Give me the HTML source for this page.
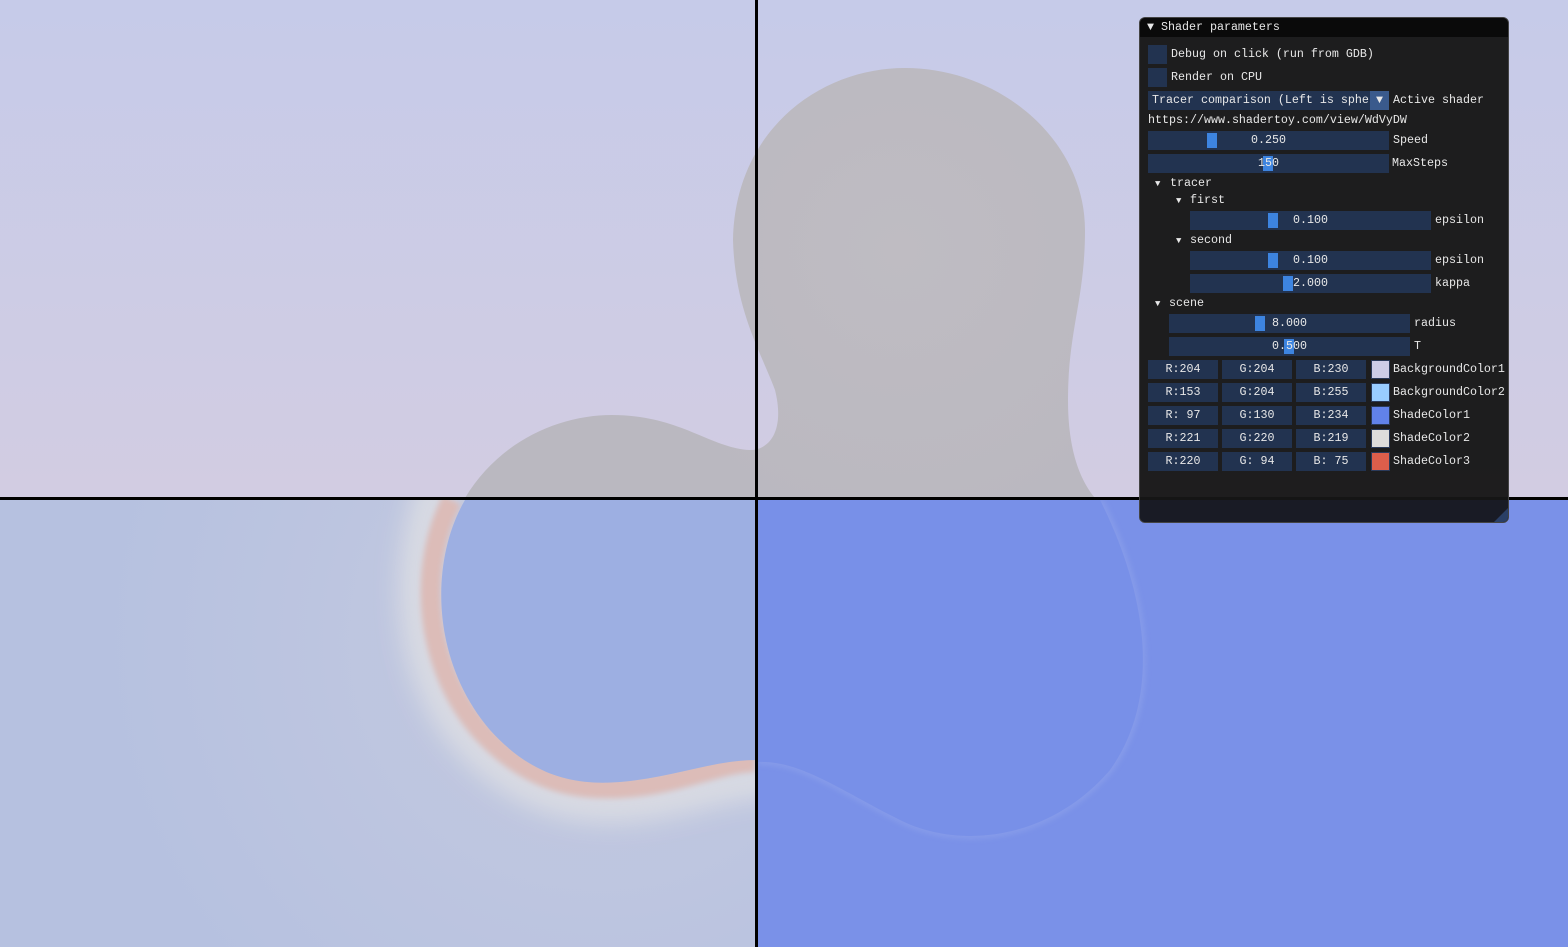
<!DOCTYPE html>
<html><head><meta charset="utf-8"><style>
html,body{margin:0;padding:0;width:1568px;height:947px;overflow:hidden;background:#c8cce9}
svg{position:absolute;left:0;top:0}
#p{position:absolute;left:1139px;top:17px;width:370px;height:506px;background:rgba(22,22,22,0.96);border:1px solid #444;border-radius:6px;box-sizing:border-box;font-family:"Liberation Mono",monospace;font-size:11.67px;color:#e8e8e8;overflow:hidden}
#p div{position:absolute;white-space:pre;line-height:19px;height:19px}
.t{left:0;top:0;width:370px;background:#0a0a0a}
.f{background:#223350}
.g{background:#3d84e0}
.c{text-align:center}
</style></head><body>
<svg width="1568" height="947" viewBox="0 0 1568 947">
<defs>
<linearGradient id="tl" x1="0" y1="0" x2="0" y2="1"><stop offset="0" stop-color="#c6cbe9"/><stop offset="1" stop-color="#d2cce2"/></linearGradient>
<radialGradient id="bl" cx="600" cy="640" r="500" gradientUnits="userSpaceOnUse"><stop offset="0" stop-color="#c5cadf"/><stop offset="1" stop-color="#b6c1e0"/></radialGradient>
<radialGradient id="bg" cx="900" cy="250" r="300" gradientUnits="userSpaceOnUse"><stop offset="0" stop-color="#bfbcc2"/><stop offset="1" stop-color="#bab8c0"/></radialGradient>
<filter id="b12" x="-50%" y="-50%" width="200%" height="200%"><feGaussianBlur stdDeviation="12"/></filter>
<filter id="b3" x="-20%" y="-20%" width="140%" height="140%"><feGaussianBlur stdDeviation="3"/></filter>
<clipPath id="cbl"><rect x="0" y="500" width="755" height="447"/></clipPath>
<clipPath id="cbr"><rect x="758" y="500" width="810" height="447"/></clipPath>
</defs>
<rect x="0" y="0" width="1568" height="498" fill="url(#tl)"/>
<rect x="0" y="500" width="755" height="447" fill="url(#bl)"/>
<rect x="758" y="500" width="810" height="447" fill="#7a91e8"/>
<path d="M465 498 C500 440 560 415 612 415 C680 415 710 448 750 450 C770 450 785 430 775 390 C760 350 735 310 733 240 C735 130 820 68 905 68 C1000 68 1085 140 1085 230 C1085 300 1068 330 1068 400 C1068 450 1080 480 1095 498 Z" fill="url(#bg)"/>
<g clip-path="url(#cbl)">
<path d="M440 480 C408 560 408 670 472 740 C525 798 585 805 625 802 C685 798 725 778 775 778" fill="none" stroke="#dfe0e4" stroke-width="40" opacity="0.8" filter="url(#b12)"/>
<path d="M452 500 C420 560 420 660 480 730 C530 785 580 790 620 788 C680 785 720 762 755 762" fill="none" stroke="#dcbcb8" stroke-width="20" filter="url(#b3)"/>
<path d="M465 500 C430 560 430 660 490 730 C535 780 580 785 620 782 C670 778 715 760 755 760 L755 500 Z" fill="#9dafe2"/>
</g>
<g clip-path="url(#cbr)">
<path d="M758 762 C800 760 840 790 900 820 C960 850 1050 840 1110 770 C1160 700 1150 600 1100 500" fill="none" stroke="#9aacec" stroke-width="5" opacity="0.5" filter="url(#b3)"/>
<path d="M758 762 C800 760 840 790 900 820 C960 850 1050 840 1110 770 C1160 700 1150 600 1100 500 L758 500 Z" fill="#7890e8"/>
</g>
<rect x="0" y="497" width="1568" height="3" fill="#000"/>
<rect x="755" y="0" width="3" height="947" fill="#000"/>
</svg>
<div id="p">
<div class="t" style="padding-left:7px">▼ Shader parameters</div>
<div class="f" style="left:8px;top:27px;width:19px"></div><div style="left:31px;top:27px">Debug on click (run from GDB)</div>
<div class="f" style="left:8px;top:50px;width:19px"></div><div style="left:31px;top:50px">Render on CPU</div>
<div class="f" style="left:8px;top:73px;width:222px;padding-left:4px;overflow:hidden">Tracer comparison (Left is sphe</div>
<div style="left:230px;top:73px;width:19px;background:#3a5a8c;text-align:center">▼</div><div style="left:253px;top:73px">Active shader</div>
<div style="left:8px;top:93px">https://www.shadertoy.com/view/WdVyDW</div>
<div class="f" style="left:8px;top:113px;width:241px"></div><div class="g" style="left:67px;top:115px;width:10px;height:15px"></div><div class="c" style="left:8px;top:113px;width:241px">0.250</div><div style="left:253px;top:113px">Speed</div>
<div class="f" style="left:8px;top:136px;width:241px"></div><div class="g" style="left:123px;top:138px;width:10px;height:15px"></div><div class="c" style="left:8px;top:136px;width:241px">150</div><div style="left:252px;top:136px">MaxSteps</div>
<div style="left:15px;top:157px;font-size:9px">▼</div><div style="left:30px;top:156px">tracer</div>
<div style="left:36px;top:174px;font-size:9px">▼</div><div style="left:50px;top:173px">first</div>
<div class="f" style="left:50px;top:193px;width:241px"></div><div class="g" style="left:128px;top:195px;width:10px;height:15px"></div><div class="c" style="left:50px;top:193px;width:241px">0.100</div><div style="left:295px;top:193px">epsilon</div>
<div style="left:36px;top:214px;font-size:9px">▼</div><div style="left:50px;top:213px">second</div>
<div class="f" style="left:50px;top:233px;width:241px"></div><div class="g" style="left:128px;top:235px;width:10px;height:15px"></div><div class="c" style="left:50px;top:233px;width:241px">0.100</div><div style="left:295px;top:233px">epsilon</div>
<div class="f" style="left:50px;top:256px;width:241px"></div><div class="g" style="left:143px;top:258px;width:10px;height:15px"></div><div class="c" style="left:50px;top:256px;width:241px">2.000</div><div style="left:295px;top:256px">kappa</div>
<div style="left:15px;top:277px;font-size:9px">▼</div><div style="left:29px;top:276px">scene</div>
<div class="f" style="left:29px;top:296px;width:241px"></div><div class="g" style="left:115px;top:298px;width:10px;height:15px"></div><div class="c" style="left:29px;top:296px;width:241px">8.000</div><div style="left:274px;top:296px">radius</div>
<div class="f" style="left:29px;top:319px;width:241px"></div><div class="g" style="left:144px;top:321px;width:10px;height:15px"></div><div class="c" style="left:29px;top:319px;width:241px">0.500</div><div style="left:274px;top:319px">T</div>

<div class="f c" style="left:8px;top:342px;width:70px">R:204</div><div class="f c" style="left:82px;top:342px;width:70px">G:204</div><div class="f c" style="left:156px;top:342px;width:70px">B:230</div><div style="left:231px;top:342px;width:17px;height:17px;background:#cccce6;border:1px solid #2a3a5a"></div><div style="left:253px;top:342px">BackgroundColor1</div>
<div class="f c" style="left:8px;top:365px;width:70px">R:153</div><div class="f c" style="left:82px;top:365px;width:70px">G:204</div><div class="f c" style="left:156px;top:365px;width:70px">B:255</div><div style="left:231px;top:365px;width:17px;height:17px;background:#99ccff;border:1px solid #2a3a5a"></div><div style="left:253px;top:365px">BackgroundColor2</div>
<div class="f c" style="left:8px;top:388px;width:70px">R: 97</div><div class="f c" style="left:82px;top:388px;width:70px">G:130</div><div class="f c" style="left:156px;top:388px;width:70px">B:234</div><div style="left:231px;top:388px;width:17px;height:17px;background:#6182ea;border:1px solid #2a3a5a"></div><div style="left:253px;top:388px">ShadeColor1</div>
<div class="f c" style="left:8px;top:411px;width:70px">R:221</div><div class="f c" style="left:82px;top:411px;width:70px">G:220</div><div class="f c" style="left:156px;top:411px;width:70px">B:219</div><div style="left:231px;top:411px;width:17px;height:17px;background:#dddcdb;border:1px solid #2a3a5a"></div><div style="left:253px;top:411px">ShadeColor2</div>
<div class="f c" style="left:8px;top:434px;width:70px">R:220</div><div class="f c" style="left:82px;top:434px;width:70px">G: 94</div><div class="f c" style="left:156px;top:434px;width:70px">B: 75</div><div style="left:231px;top:434px;width:17px;height:17px;background:#dc5e4b;border:1px solid #2a3a5a"></div><div style="left:253px;top:434px">ShadeColor3</div>
<div style="left:0;top:482px;width:370px;height:24px;background:rgba(25,28,38,0.9)"></div>
<div style="left:354px;top:490px;width:0;height:0;border-left:14px solid transparent;border-bottom:14px solid #2a3f66"></div>
</div>
</body></html>
